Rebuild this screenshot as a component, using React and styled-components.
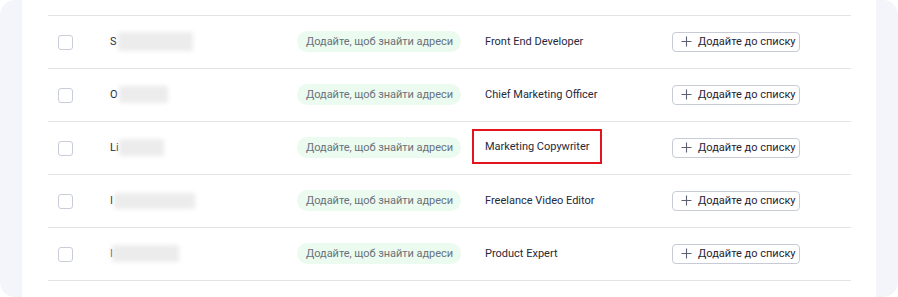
import React from "react";
import styled, { createGlobalStyle } from "styled-components";

const Global = createGlobalStyle`
  html, body { margin: 0; padding: 0; background: #ffffff; }
  body { font-family: Roboto, "Noto Sans", Arial, sans-serif; }
  * { box-sizing: border-box; }
`;

const Frame = styled.div`
  width: 898px;
  height: 297px;
  background: #f4f5fb;
  border-radius: 15px;
  padding: 0 22px;
  overflow: hidden;
`;

const Panel = styled.div`
  background: #ffffff;
  height: 100%;
  padding: 15px 25px 0 26px;
`;

const List = styled.div`
  border-top: 1px solid #e2e3e7;
`;

const Row = styled.div`
  display: grid;
  grid-template-columns: 52px 187px 188px 187px 1fr;
  align-items: center;
  height: 53px;
  padding-left: 10px;
  padding-bottom: 1px;
  border-bottom: 1px solid #e2e3e7;
`;

const Check = styled.span`
  display: block;
  width: 15px;
  height: 15px;
  margin-top: 1px;
  border: 1px solid #c9cdd9;
  border-radius: 3px;
  background: #fff;
`;

const Name = styled.div`
  display: flex;
  align-items: center;
  font-size: 11px;
  color: #1f2a3c;
`;

const Letter = styled.span`
  position: relative;
  z-index: 0;
`;

const Redact = styled.span`
  display: inline-block;
  position: relative;
  z-index: 1;
  height: ${(p) => p.h}px;
  width: ${(p) => p.w}px;
  margin-left: ${(p) => p.ml}px;
  background: #ececec;
  filter: blur(2px);
  border-radius: 2px;
`;

const Pill = styled.span`
  justify-self: start;
  display: inline-flex;
  align-items: center;
  height: 21px;
  padding: 0 8px 0 9px;
  border-radius: 11px;
  background: #ebfbef;
  color: #6a717c;
  font-size: 11px;
  letter-spacing: -0.05px;
  white-space: nowrap;
`;

const Job = styled.span`
  justify-self: start;
  font-size: 11px;
  color: #1f2a3c;
  white-space: nowrap;
  line-height: 13px;
  ${(p) =>
    p.$highlight &&
    `
    border: 2px solid #e3141e;
    padding: 9px 11px 9px 11px;
    margin-left: -13px;
    margin-top: -3px;
  `}
`;

const AddButton = styled.button`
  justify-self: start;
  display: inline-flex;
  align-items: center;
  gap: 6px;
  height: 20px;
  width: 128px;
  padding: 0 0 0 8px;
  border: 1px solid #c6cbd6;
  border-radius: 4px;
  background: #fff;
  font-family: Roboto, "Noto Sans", Arial, sans-serif;
  font-size: 11px;
  color: #1f2433;
  cursor: pointer;
  white-space: nowrap;
  svg { flex-shrink: 0; }
`;

const Plus = () => (
  <svg width="11" height="11" viewBox="0 0 11 11">
    <path d="M5.5 0.5v10M0.5 5.5h10" stroke="#5b6170" strokeWidth="1.1" fill="none" />
  </svg>
);

const rows = [
  { letter: "S", w: 75, h: 19, ml: 1, job: "Front End Developer" },
  { letter: "O", w: 49, h: 17, ml: 1, job: "Chief Marketing Officer" },
  { letter: "Li", w: 45, h: 17, ml: 0, job: "Marketing Copywriter", highlight: true },
  { letter: "I", w: 81, h: 16, ml: 1, job: "Freelance Video Editor" },
  { letter: "I", w: 67, h: 17, ml: -1, job: "Product Expert" },
];

export default function App() {
  return (
    <>
      <Global />
      <Frame>
        <Panel>
          <List>
            {rows.map((r, i) => (
              <Row key={i}>
                <Check />
                <Name>
                  <Letter>{r.letter}</Letter>
                  <Redact w={r.w} h={r.h} ml={r.ml} />
                </Name>
                <Pill>Додайте, щоб знайти адреси</Pill>
                <Job $highlight={r.highlight}>{r.job}</Job>
                <AddButton>
                  <Plus />
                  Додайте до списку
                </AddButton>
              </Row>
            ))}
          </List>
        </Panel>
      </Frame>
    </>
  );
}
